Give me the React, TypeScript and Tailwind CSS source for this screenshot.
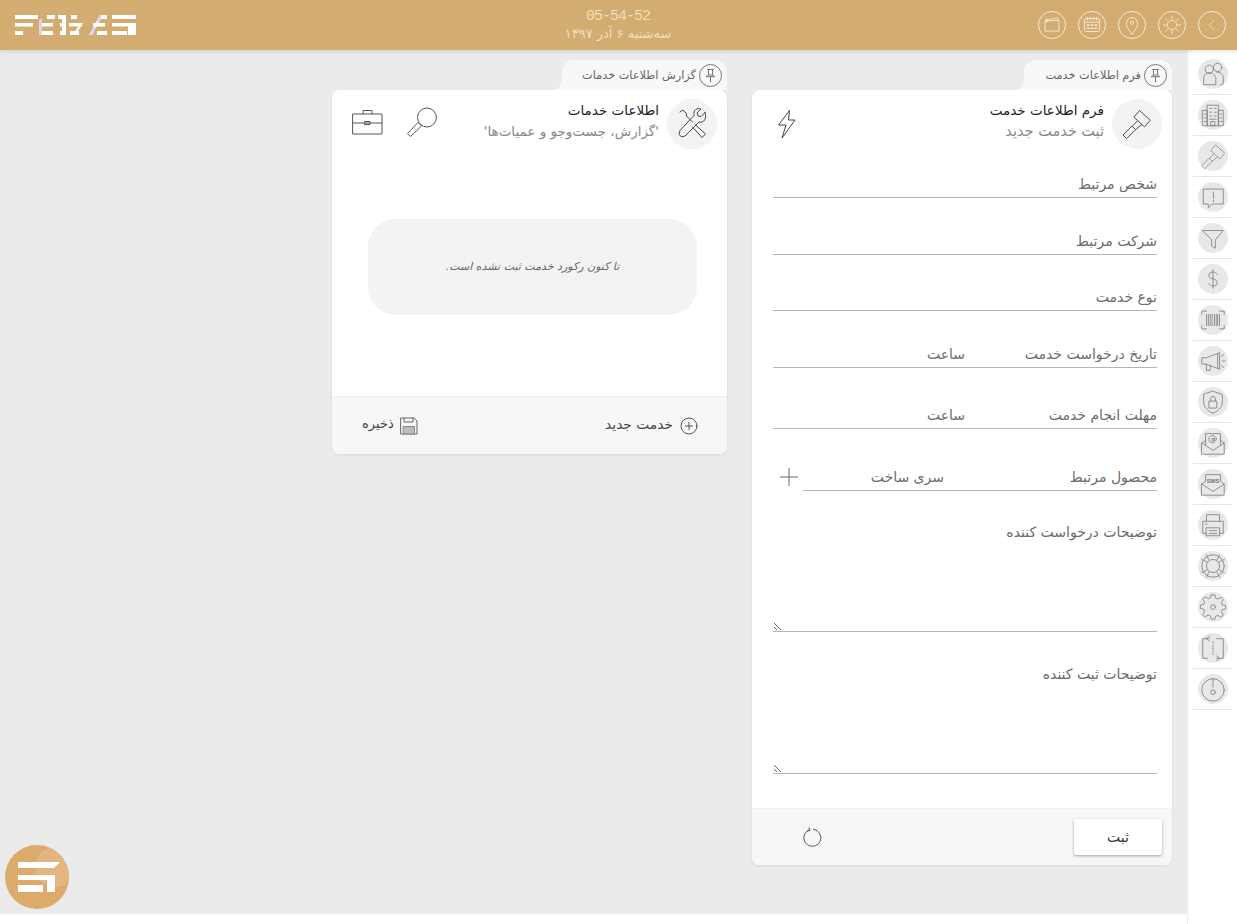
import React from "react";

const S = ({ children, size = 30, vb = 30, stroke = "#777", sw = 1 }: { children: React.ReactNode; size?: number; vb?: number; stroke?: string; sw?: number }) => (
  <svg width={size} height={size} viewBox={`0 0 ${vb} ${vb}`} fill="none" stroke={stroke} strokeWidth={sw} strokeLinecap="round" strokeLinejoin="round" className="block shrink-0">
    {children}
  </svg>
);

const hammer = (
  <>
    <path d="M21 4l11 10-6 7-11-10z" />
    <path d="M18.500 14.500L13 20.500M23 18.500L16.500 24" />
    <path d="M13 20.500l3.500 3.500L7 33.500 3.500 30z" />
  </>
);

const sideIcons: React.ReactNode[] = [
  <><circle cx="11" cy="10" r="4.500" /><circle cx="20" cy="8" r="4.500" /><path d="M5 26v-6c0-4 3-6.500 6-6.500s7 2.500 7 6.500v6zM19 13c4 0 7 2 7 6v6c0 1-1 1.500-3 1.500" /></>,
  <><path d="M9 4.500h12v22H9zM4 10h5v16.500H4zM21 10h5v16.500h-5zM13 22h4v4.500h-4z" /><path d="M11.500 8h2M16.500 8h2M11.500 12h2M16.500 12h2M11.500 16h2M16.500 16h2M11.500 19.500h7M5.500 14h2M5.500 18h2M5.500 22h2M22.500 14h2M22.500 18h2M22.500 22h2" /></>,
  <g transform="scale(.86)">{hammer}</g>,
  <><path d="M5 6.500h21v16H14l-4 4v-4H5z" /><path d="M15.500 9.500v7M15.500 18.500v1.500" /></>,
  <><path d="M4 7h22l-8.500 10v9l-4-2.500V17z" /></>,
  <><path d="M15 5v20M19.500 10c-1-1.500-2.500-2.500-4.500-2.500-2.500 0-4.500 1.300-4.500 3.700s2 3.200 4.500 3.800 4.500 1.300 4.500 3.800-2 3.700-4.500 3.700c-2 0-3.500-1-4.500-2.500" /></>,
  <><path d="M3 9V5.500h5M22 5.500h5V9M3 21v3.500h5M22 24.500h5V21" /><path d="M8 9v12M10 9v12M12 9v12M14 9v12M16.500 9v12M18.500 9v12M20 9v12M22 9v12" /></>,
  <><path d="M3 12v6l5 .500L20 23V7L8 11.500z" /><path d="M20 7l2-1v18l-2-1M8 18.500V25h4v-5.500M25 15h3M24 10l2.500-2M24 20l2.500 2" /></>,
  <><path d="M15 3.500l10 3.500v8c0 6-5 10-10 12-5-2-10-6-10-12V7z" /><rect x="11" y="14" width="8" height="7.500" /><path d="M12.500 14v-2.500a2.500 2.500 0 015 0V14" /></>,
  <><path d="M3 15l4-3V5h16v7l4 3v12H3z" /><path d="M3 15l12 8 12-8M7 12v5.500M23 12v5.500" /><circle cx="15" cy="11.500" r="1.500" /><path d="M16.500 10v2.500c1.500 1 2.300-.5 2-2a4 4 0 10-2 4" /></>,
  <><path d="M3 15l4-3V5h16v7l4 3v12H3z" /><path d="M3 15l12 8 12-8" /><text x="15" y="14" fontSize="6.500" fontWeight="700" textAnchor="middle" stroke="none" fill="#777" fontFamily="Liberation Sans, sans-serif">SMS</text></>,
  <><path d="M8 11V4h14v7M8 24H4V11h22v13h-4" /><path d="M8 18h14v8.500H8z" /><path d="M11 21h8M11 24h8M6.500 14h2" /></>,
  <><circle cx="15" cy="15" r="12" /><circle cx="15" cy="15" r="7" /><path d="M11 9L8 3M19 9l3-6M9 11L3 8M9 19l-6 3M21 11l6-3M21 19l6 3M11 21l-3 6M19 21l3 6" /></>,
  <><path d="M13 3h4l.800 3.500 2.500 1 3.200-2 2.500 2.500-2 3.200 1 2.500 3.500.800v3.500l-3.500.800-1 2.500 2 3.200-2.500 2.500-3.200-2-2.500 1L17 29h-4l-.800-3.500-2.500-1-3.200 2L4 24l2-3.200-1-2.500-3.500-.800V14l3.500-.800 1-2.500-2-3.200L6.500 5l3.200 2 2.500-1z" transform="translate(0 -1)" /><circle cx="15" cy="15" r="2.500" /></>,
  <><path d="M11 5H4v21h5M19 5h7v21h-7M11 2.500L8 5l3 2.500M19 23.500l3 2.500-3 2.500" /><path d="M15 8v1.500M15 12v10" strokeDasharray="1.500 1.500" /></>,
  <><circle cx="15" cy="16" r="12" /><path d="M15 4v9" /><circle cx="15" cy="18.500" r="2.500" /></>,
];

const headIcons: React.ReactNode[] = [
  <><path d="M7.500 9.500L19.500 6c.700 0 1 .4 1 1v2.500M7.500 9.500a1 1 0 00-1 1v10h15v-11z" /><circle cx="8.500" cy="9" r="1.500" /></>,
  <><rect x="6" y="7" width="16" height="14" rx="1" /><path d="M6 11h16M9 5.500v3M12 5.500v3M16 5.500v3M19 5.500v3" /><path d="M9 14h2M13 14h2M17 14h2M9 17.500h2M13 17.500h2M17 17.500h2" strokeWidth="1.500" /></>,
  <><path d="M14 24c-4-5-6-9-6-12a6 6 0 0112 0c0 3-2 7-6 12z" /><circle cx="14" cy="11.500" r="1.800" /></>,
  <><circle cx="14" cy="14" r="5" /><path d="M14 4.500v3M14 20.500v3M4.500 14h3M20.500 14h3M7.300 7.300l2 2M18.700 18.700l2 2M7.300 20.700l2-2M18.700 9.300l2-2" /></>,
  <><path d="M16 9l-5 5 5 5" stroke="#eadbbd" /></>,
];

const Pin = () => (
  <div className="flex h-[23px] w-[23px] shrink-0 items-center justify-center rounded-full border border-[#777]">
    <S size={15} vb={15}><path d="M4.500 1.500h6M5.500 1.500v5.500M9.500 1.500v5.500M3.500 8.500l2-1.500h4l2 1.500zM7.500 8.500v5.500" /></S>
  </div>
);

function Tab({ label, w }: { label: string; w: string }) {
  return (
    <div className={`relative flex h-[30px] items-center gap-[3px] self-start rounded-t-xl bg-[#f8f8f8] pr-[5px] pt-[1px] ${w}`}>
      <Pin />
      <span className="text-[11.300px] leading-none text-[#666]">{label}</span>
      <span className="absolute bottom-0 right-full h-[10px] w-[10px] bg-[#f8f8f8]">
        <span className="block h-full w-full rounded-br-[10px] bg-[#ebebeb]" />
      </span>
    </div>
  );
}

function CardHead({ title, sub, subClass, icon, children }: { title: string; sub: string; subClass: string; icon: React.ReactNode; children: React.ReactNode }) {
  return (
    <div className="flex h-[60px] items-start justify-between pt-[9px]">
      <div className="mr-[10px] flex items-start">
        <div className="flex h-[50px] w-[50px] shrink-0 items-center justify-center rounded-full bg-[#f3f3f3]">{icon}</div>
        <div className="mr-[8px] mt-[1px]">
          <div className="text-[13.500px] leading-[21px] text-[#222]">{title}</div>
          <div className={`leading-[21px] text-[#888] ${subClass}`}>{sub}</div>
        </div>
      </div>
      {children}
    </div>
  );
}

const inputCls = "min-w-0 bg-transparent text-[14px] text-[#555] outline-none placeholder:text-[#6b6b6b]";
const lineCls = "h-[27px]";

function Field({ p, className }: { p: string; className: string }) {
  return (
    <div className={`border-b border-[#b5b5b5] ${className}`}>
      <input className={`${inputCls} ${lineCls} block w-full`} placeholder={p} />
    </div>
  );
}

function Logo() {
  const bars: [number, number, number][] = [
    [0, 0, 23], [32, 0, 8], [43, 0, 8], [56, 0, 6], [85, 0, 7], [97, 0, 24],
    [0, 8, 18], [26, 8, 12], [45, 8, 5], [54, 8, 13], [78, 8, 12], [97, 8, 24],
    [0, 16, 8], [26, 16, 12], [45, 16, 5], [55, 16, 9], [82, 16, 10], [97, 16, 15],
  ];
  return (
    <svg width="122" height="20" viewBox="0 0 122 20" className="block">
      {bars.map(([x, y, w], i) => (
        <rect key={i} x={x} y={y} width={w} height={y === 8 ? 3.5 : 4} fill="#fff" />
      ))}
      <rect x="113" y="8" width="8" height="12" fill="#fff" />
      <rect x="24" y="4" width="3" height="16" fill="#dcd2ee" />
      <rect x="47" y="0" width="4" height="20" fill="#fff" />
      <path d="M65 8h3l-7 12h-3zM85 0h3L77 20h-3z" fill="#fff" opacity=".85" />
      <path d="M82 8l3-8h2l-3 8zM78 12h3l-3 8h-3z" fill="#dcd2ee" />
    </svg>
  );
}

export default function App() {
  const font = { fontFamily: '"DejaVu Sans", "Noto Sans", sans-serif' };
  return (
    <div dir="rtl" style={font} className="flex h-[924px] w-full flex-col overflow-hidden bg-white">
      <header className="relative z-10 grid h-[50px] shrink-0 grid-cols-3 items-center bg-[#d2ac70] pl-[15px] pr-[11px] shadow-[0_1px_4px_rgba(0,0,0,0.15)]">
        <div className="flex gap-[12px]">
          {[4, 3, 2, 1, 0].map((i) => (
            <div key={i} className="flex h-[28px] w-[28px] items-center justify-center rounded-full border border-[#f6ead4]">
              <S size={26} vb={28} stroke="#f6ead4">{headIcons[i]}</S>
            </div>
          ))}
        </div>
        <div className="flex flex-col items-center pr-[5px] pt-[2px] text-[#f0dfbd]">
          <div dir="ltr" className="text-[15px] leading-[16px] tracking-[-1px]" style={{ fontFamily: '"Liberation Mono", monospace' }}>05-54-52</div>
          <div className="text-[13px] leading-[18px]">سه‌شنبه ۶ آذر ۱۳۹۷</div>
        </div>
        <div className="flex justify-end"><Logo /></div>
      </header>

      <div className="flex min-h-0 flex-1">
        <aside className="w-[50px] shrink-0 border-l border-[#ececec] bg-white pt-[4px]">
          {sideIcons.map((ic, i) => (
            <div key={i} className="mx-[5px] flex h-[41px] items-center justify-center border-b border-[#e6e6e6]">
              <div className="flex h-[30px] w-[30px] items-center justify-center rounded-full bg-[#e8e8e8]">
                <S size={28} stroke="#808080" sw={0.9}>{ic}</S>
              </div>
            </div>
          ))}
        </aside>

        <main className="relative flex h-[864px] flex-1 items-start gap-[25px] bg-[#ebebeb] pr-[15px] pt-[10px]">
          <section className="flex w-[420px] flex-col">
            <Tab label="فرم اطلاعات خدمت" w="w-[148px]" />
            <div className="rounded-lg bg-white shadow-[0_1px_3px_rgba(0,0,0,0.08)]">
              <CardHead
                title="فرم اطلاعات خدمت"
                sub="ثبت خدمت جدید"
                subClass="text-[14.500px]"
                icon={<S size={34} vb={36} stroke="#444">{hammer}</S>}
              >
                <div className="ml-[26px] mt-[11px]">
                  <svg width="18" height="29" viewBox="0 0 18 29" fill="none" stroke="#444" strokeLinejoin="round" className="block">
                    <path d="M11.500 .5L.5 15H8L4 28 17 10h-6.500z" />
                  </svg>
                </div>
              </CardHead>
              <div className="flex flex-col pl-[21px] pr-[15px]">
                <Field p="شخص مرتبط" className="mt-[20px]" />
                <Field p="شرکت مرتبط" className="mt-[29px]" />
                <Field p="نوع خدمت" className="mt-[28px]" />
                <div className="mt-[29px] flex border-b border-[#b5b5b5]">
                  <input className={`${inputCls} ${lineCls} w-[192px]`} placeholder="تاریخ درخواست خدمت" />
                  <input className={`${inputCls} ${lineCls} flex-1`} placeholder="ساعت" />
                </div>
                <div className="mt-[33px] flex border-b border-[#b5b5b5]">
                  <input className={`${inputCls} ${lineCls} w-[192px]`} placeholder="مهلت انجام خدمت" />
                  <input className={`${inputCls} ${lineCls} flex-1`} placeholder="ساعت" />
                </div>
                <div className="mt-[34px] flex items-center">
                  <div className="flex min-w-0 flex-1 border-b border-[#b5b5b5]">
                    <input className={`${inputCls} ${lineCls} w-[213px]`} placeholder="محصول مرتبط" />
                    <input className={`${inputCls} ${lineCls} flex-1`} placeholder="سری ساخت" />
                  </div>
                  <div className="mr-[2px] w-[28px] shrink-0">
                    <S size={24} vb={24} stroke="#666"><path d="M12 3.500v17M3.500 12h17" /></S>
                  </div>
                </div>
                <textarea className={`${inputCls} mt-[29px] block h-[112px] w-full border-b border-[#b5b5b5] pt-[2px]`} placeholder="توضیحات درخواست کننده" />
                <textarea className={`${inputCls} mt-[30px] block h-[112px] w-full border-b border-[#b5b5b5] pt-[2px]`} placeholder="توضیحات ثبت کننده" />
              </div>
              <div className="mt-[34px] flex h-[57px] items-center justify-between rounded-b-lg border-t border-[#f0f0f0] bg-[#f7f7f7] pl-[50px] pr-[10px]">
                <button className="h-[36px] w-[88px] rounded-[2px] bg-white text-[14px] text-[#333] shadow-[0_1px_3px_rgba(0,0,0,0.35)]">ثبت</button>
                <S size={20} vb={20} stroke="#555">
                  <path d="M11.500 2.300a8.500 8.500 0 11-4.500.600M7 .8l1 2.400-2.500 1" />
                </S>
              </div>
            </div>
          </section>

          <section className="flex w-[395px] flex-col">
            <Tab label="گزارش اطلاعات خدمات" w="w-[165px]" />
            <div className="rounded-lg bg-white shadow-[0_1px_3px_rgba(0,0,0,0.08)]">
              <CardHead
                title="اطلاعات خدمات"
                sub="'گزارش، جست‌وجو و عمیات‌ها'"
                subClass="text-[13.500px]"
                icon={
                  <S size={34} vb={34} stroke="#444">
                    <path d="M5 5l3-2 3.500 3.500V9l6 6M20 17.500l10.500 9.500-3.500 3.500-9.500-10.500" />
                    <path d="M30 5.500l-4 4-3-.5-1-3 4-4c-4-1.500-8 1-7 6.500L5 23.500l-1 4 2.500 2.500 3.500-1 14-14c5 1 8-3 6-9.500z" />
                  </S>
                }
              >
                <div className="ml-[20px] flex items-center gap-[21px] pt-[6px]">
                  <S size={34} vb={34} stroke="#555">
                    <circle cx="22" cy="12.500" r="9.500" />
                    <path d="M15 19.500l-2-2L2.500 28.500l3 3L16.500 21z" />
                  </S>
                  <S size={32} vb={32} stroke="#555">
                    <rect x="1" y="8" width="29" height="20" />
                    <path d="M1 17h29M11 8V4.500h9V8M13 15.500h5v3h-5z" />
                  </S>
                </div>
              </CardHead>
              <div className="pb-[81px] pl-[36px] pr-[30px] pt-[69px]">
                <div className="flex h-[96px] items-center justify-center rounded-[28px] bg-[#f3f3f3] text-[11px] italic text-[#666]">
                  تا کنون رکورد خدمت ثبت نشده است.
                </div>
              </div>
              <div className="flex h-[58px] items-center justify-between rounded-b-lg border-t border-[#efefef] bg-[#f7f7f7] pl-[30px] pr-[29px]">
                <div className="flex items-center gap-[7px]">
                  <S size={18} vb={18} stroke="#555">
                    <circle cx="9" cy="9" r="8" />
                    <path d="M9 5.500v7M5.500 9h7" />
                  </S>
                  <span className="-mt-[3px] text-[13.800px] text-[#444]">خدمت جدید</span>
                </div>
                <div className="flex items-center gap-[6px]">
                  <S size={18} vb={18} stroke="#666">
                    <path d="M1 1h13l3 3v13H1z" />
                    <path d="M4 1v4h9V1" />
                    <rect x="3.500" y="9.500" width="11" height="7.500" fill="#bbb" stroke="#888" />
                  </S>
                  <span className="-mt-[3px] text-[13px] text-[#444]">ذخیره</span>
                </div>
              </div>
            </div>
          </section>

          <div dir="ltr" className="absolute bottom-[5px] left-[5px] h-[64px] w-[64px] overflow-hidden rounded-full bg-[#dcab6c]">
            <div className="absolute right-[-6px] top-[2px] h-[40px] w-[40px] rounded-full bg-[#e2b581]" />
            <svg width="64" height="64" viewBox="0 0 64 64" className="absolute left-0 top-0">
              <path d="M13 17h42l-6 6H13zM13 30h37v17h-8V35H13zM13 40h25v7H13z" fill="#fff" />
            </svg>
          </div>
        </main>
      </div>
    </div>
  );
}
